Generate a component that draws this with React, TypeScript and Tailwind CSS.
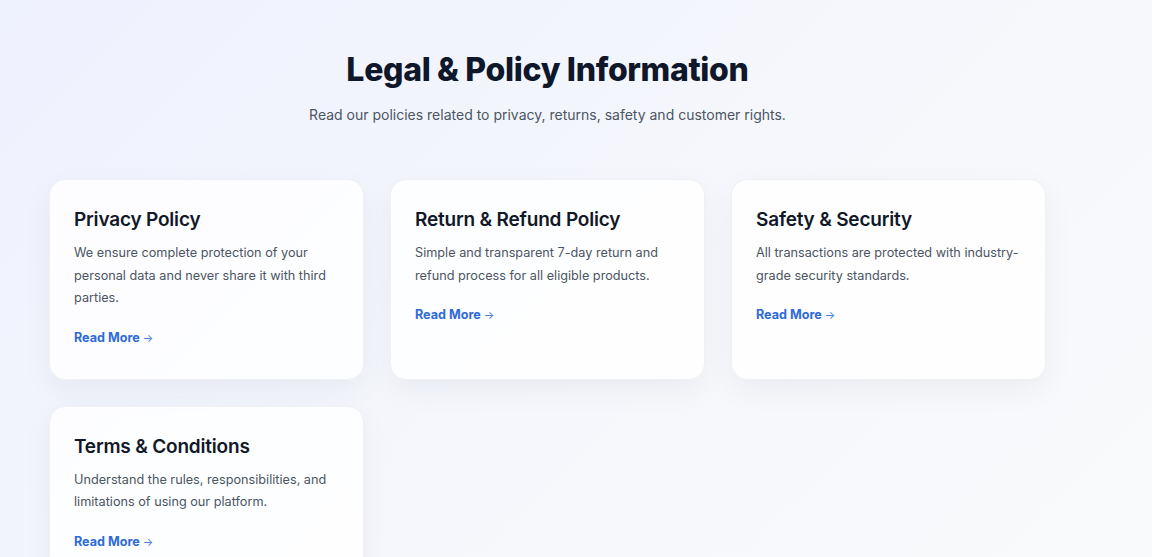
import React from "react";

const cards = [
  {
    title: "Privacy Policy",
    desc: "We ensure complete protection of your personal data and never share it with third parties.",
  },
  {
    title: "Return & Refund Policy",
    desc: "Simple and transparent 7-day return and refund process for all eligible products.",
  },
  {
    title: "Safety & Security",
    desc: "All transactions are protected with industry-grade security standards.",
  },
  {
    title: "Terms & Conditions",
    desc: "Understand the rules, responsibilities, and limitations of using our platform.",
  },
];

export default function App() {
  return (
    <div className="min-h-screen w-full bg-[linear-gradient(135deg,#eef1fe_0%,#f5f7fc_50%,#f9fafb_100%)] font-['Inter','Noto_Sans',sans-serif]">
      <div className="ml-[49px] w-[997px] pt-[51px] pb-16">
        <h1 className="text-center text-[32px] leading-[1.2] font-extrabold tracking-[-0.01em] text-[#0f172a]">
          Legal &amp; Policy Information
        </h1>
        <p className="mt-[15px] text-center text-[14px] leading-[1.5] text-[#4b5563]">
          Read our policies related to privacy, returns, safety and customer rights.
        </p>
        <div className="mt-[54px] grid grid-cols-[repeat(3,315px)] gap-[26px]">
          {cards.map((c) => (
            <div
              key={c.title}
              className="rounded-[16px] border border-[#eef0f4] bg-white/85 px-6 pt-[25px] pb-[31px] shadow-[0_10px_30px_rgba(15,23,42,0.05)]"
            >
              <h3 className="text-[19px] leading-[30px] font-semibold tracking-[-0.01em] text-[#111827]">
                {c.title}
              </h3>
              <p className="mt-[7px] text-[12.7px] leading-[22.5px] text-[#4b5563]">
                {c.desc}
              </p>
              <a
                href="#"
                className="mt-[18px] inline-block text-[12.6px] leading-[20px] font-bold text-[#2e6bd8]"
              >
                Read More <span className="text-[11px] font-normal text-[#4a7fdc]">→</span>
              </a>
            </div>
          ))}
        </div>
      </div>
    </div>
  );
}
